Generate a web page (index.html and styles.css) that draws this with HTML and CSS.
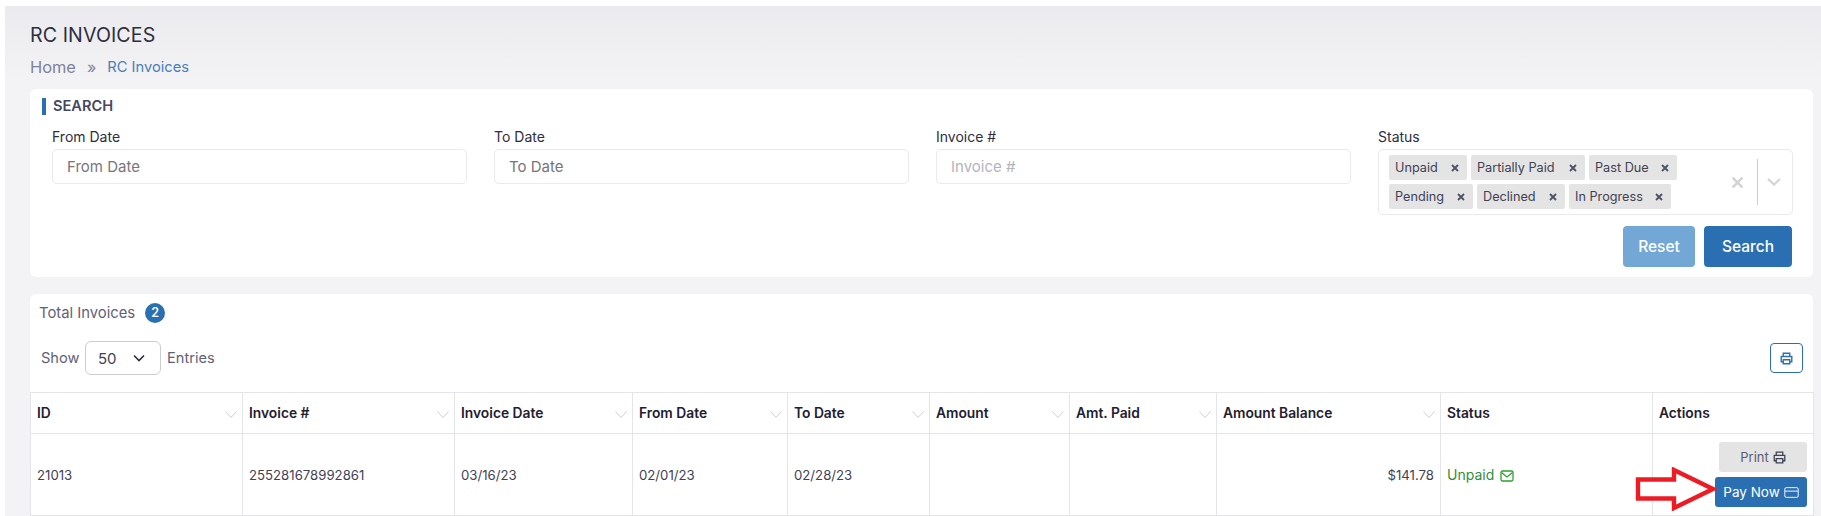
FILE: index.html
```html
<!DOCTYPE html>
<html lang="en">
<head>
<meta charset="utf-8">
<title>RC Invoices</title>
<link rel="stylesheet" href="styles.css">
</head>
<body>
<div class="page">
  <h1 class="title">RC INVOICES</h1>
  <nav class="crumbs"><span class="crumb-home">Home</span><span class="crumb-sep">»</span><span class="crumb-cur">RC Invoices</span></nav>

  <section class="card search-card">
    <h2 class="section-head">SEARCH</h2>
    <div class="fields">
      <div class="field"><label class="label">From Date</label><div class="input dark">From Date</div></div>
      <div class="field"><label class="label">To Date</label><div class="input dark">To Date</div></div>
      <div class="field"><label class="label">Invoice #</label><div class="input light">Invoice #</div></div>
      <div class="field"><label class="label">Status</label>
        <div class="multi">
          <div class="tags">
            <span class="tag t78">Unpaid<svg class="tag-x" viewBox="0 0 8 8"><path d="M1 1l6 6M7 1L1 7"/></svg></span>
            <span class="tag t114">Partially Paid<svg class="tag-x" viewBox="0 0 8 8"><path d="M1 1l6 6M7 1L1 7"/></svg></span>
            <span class="tag t88">Past Due<svg class="tag-x" viewBox="0 0 8 8"><path d="M1 1l6 6M7 1L1 7"/></svg></span>
            <span class="tag t84">Pending<svg class="tag-x" viewBox="0 0 8 8"><path d="M1 1l6 6M7 1L1 7"/></svg></span>
            <span class="tag t88">Declined<svg class="tag-x" viewBox="0 0 8 8"><path d="M1 1l6 6M7 1L1 7"/></svg></span>
            <span class="tag t102">In Progress<svg class="tag-x" viewBox="0 0 8 8"><path d="M1 1l6 6M7 1L1 7"/></svg></span>
          </div>
          <svg class="clear-x" viewBox="0 0 12 12"><path d="M1.5 1.5l9 9M10.5 1.5l-9 9"/></svg>
          <span class="divider"></span>
          <svg class="multi-chev" viewBox="0 0 14 8"><path d="M1 1l6 5.5L13 1"/></svg>
        </div>
      </div>
    </div>
    <div class="actions">
      <button class="btn reset">Reset</button>
      <button class="btn search">Search</button>
    </div>
  </section>

  <section class="card list-card">
    <div class="total"><span>Total Invoices</span><span class="badge">2</span></div>
    <div class="toolbar">
      <div class="show"><span class="show-word">Show</span>
        <div class="select"><span>50</span><svg class="select-chev" viewBox="0 0 12 8"><path d="M1 1.5l5 5 5-5"/></svg></div>
        <span>Entries</span></div>
      <button class="print-outline"><svg class="ico" viewBox="0 0 16 16"><path d="M4 5V1.5h8V5M4 12H1.5V5.5h13V12H12M4 9.5h8v5H4z"/></svg></button>
    </div>
    <table class="grid">
      <colgroup><col class="c1"><col class="c2"><col class="c3"><col class="c4"><col class="c5"><col class="c6"><col class="c7"><col class="c8"><col class="c9"><col class="c10"></colgroup>
      <thead><tr>
        <th>ID<svg class="sort" viewBox="0 0 12 7"><path d="M.5.5L6 6.5 11.5.5"/></svg></th>
        <th>Invoice #<svg class="sort" viewBox="0 0 12 7"><path d="M.5.5L6 6.5 11.5.5"/></svg></th>
        <th>Invoice Date<svg class="sort" viewBox="0 0 12 7"><path d="M.5.5L6 6.5 11.5.5"/></svg></th>
        <th>From Date<svg class="sort" viewBox="0 0 12 7"><path d="M.5.5L6 6.5 11.5.5"/></svg></th>
        <th>To Date<svg class="sort" viewBox="0 0 12 7"><path d="M.5.5L6 6.5 11.5.5"/></svg></th>
        <th>Amount<svg class="sort" viewBox="0 0 12 7"><path d="M.5.5L6 6.5 11.5.5"/></svg></th>
        <th>Amt. Paid<svg class="sort" viewBox="0 0 12 7"><path d="M.5.5L6 6.5 11.5.5"/></svg></th>
        <th>Amount Balance<svg class="sort" viewBox="0 0 12 7"><path d="M.5.5L6 6.5 11.5.5"/></svg></th>
        <th>Status</th>
        <th>Actions</th>
      </tr></thead>
      <tbody><tr>
        <td>21013</td>
        <td>255281678992861</td>
        <td>03/16/23</td>
        <td>02/01/23</td>
        <td>02/28/23</td>
        <td></td>
        <td></td>
        <td class="num">$141.78</td>
        <td class="status">Unpaid <svg class="mail" viewBox="0 0 14 12"><rect x="1" y="1" width="12" height="10" rx="1.5"/><path d="M1.5 2.5L7 7l5.5-4.5"/></svg></td>
        <td class="act-cell">
          <div class="row-actions">
            <button class="mini print">Print <svg class="ico-sm" viewBox="0 0 16 16"><path d="M4 5V1.5h8V5M4 12H1.5V5.5h13V12H12M4 9.5h8v5H4z"/></svg></button>
            <button class="mini pay">Pay Now <svg class="card-ico" viewBox="0 0 16 12"><rect x=".7" y=".7" width="14.6" height="10.6" rx="1.5"/><path d="M.7 4.5h14.6"/></svg></button>
          </div>
        </td>
      </tr></tbody>
    </table>
  </section>
</div>
<svg class="arrow" viewBox="0 0 82 44"><path d="M3 12.5H39V3L78 22 39 41V31.5H3z"/></svg>
</body>
</html>
```

FILE: styles.css
```css
* { box-sizing: border-box; }
html, body { margin: 0; height: 516px; overflow: hidden; background: #fff; }
body { font-family: Inter, "Noto Sans", sans-serif; color: #3f4254; position: relative; }
button { font-family: inherit; }

.page {
  margin: 6px 0 0 5px;
  height: 510px;
  padding: 17px 8px 0 25px;
  background: linear-gradient(#ebebef, #f3f3f5 75px);
}
.title { margin: 0; font-size: 19.6px; line-height: 24px; font-weight: 400; color: #2e2e40; letter-spacing: .1px; }
.crumbs { display: flex; align-items: center; margin: 8px 0 0; height: 23px; font-size: 16.4px; color: #7e8299; }
.crumb-sep { margin: 0 11px 0 11px; font-size: 16px; }
.crumb-cur { font-size: 14.7px; color: #4a7fb9; }

.card { background: #fff; border-radius: 6px; }
.search-card { height: 188px; margin-top: 11px; padding: 9px 21px 0 22px; }
.section-head {
  margin: 0 0 0 -10px; padding-left: 7px; border-left: 4px solid #2b6fb3;
  height: 17px; line-height: 17px; font-size: 14.6px; font-weight: 600; color: #454760;
}
.fields { display: grid; grid-template-columns: repeat(4, 415px); column-gap: 27px; margin-top: 13px; }
.label { display: block; height: 21px; line-height: 18px; font-size: 14px; color: #2e2e40; }
.input {
  height: 35px; line-height: 33px; padding-left: 14px; font-size: 15px;
  border: 1px solid #e9e9f2; border-radius: 5px; background: #fff;
}
.dark { color: #77757a; }
.light { color: #b3b3bd; }
.multi {
  position: relative; height: 66px; display: flex; align-items: center;
  border: 1px solid #e9e9f2; border-radius: 5px; padding: 5px 0 5px 10px;
}
.tags { display: flex; flex-wrap: wrap; gap: 4px; width: 300px; }
.tag {
  display: flex; align-items: center; justify-content: space-between;
  height: 25px; padding: 0 8px 0 6px; font-size: 12.7px; color: #3f4254;
  background: #e4e4e4; border-radius: 2px;
}
.t78 { width: 78px; } .t114 { width: 114px; } .t88 { width: 88px; } .t84 { width: 84px; } .t102 { width: 102px; }
.tag-x { width: 8px; height: 8px; flex: none; fill: none; stroke: #4d5168; stroke-width: 1.8; }
.clear-x { width: 13px; height: 13px; margin-left: 42px; fill: none; stroke: #d4d4d4; stroke-width: 2.4; }
.divider { width: 1px; height: 46px; margin-left: 13px; background: #ccc; }
.multi-chev { width: 14px; height: 8px; margin-left: 9px; fill: none; stroke: #d4d4d4; stroke-width: 2.2; }
.actions { display: flex; justify-content: flex-end; gap: 9px; margin-top: 11px; }
.btn { height: 41px; border: 0; border-radius: 4px; color: #fff; font-size: 15.5px; font-weight: 500; }
.reset { width: 72px; background: #73a7d6; }
.search { width: 88px; background: #2b6fb3; }

.list-card { height: 240px; margin-top: 17px; padding-top: 9px; }
.total { display: flex; align-items: center; gap: 10px; height: 20px; margin: 0 0 0 9px; font-size: 14.8px; color: #5e6278; }
.badge { width: 20px; height: 20px; line-height: 20px; border-radius: 50%; background: #2b6fb3; color: #fff; text-align: center; font-size: 12.5px; font-weight: 600; }
.toolbar { display: flex; align-items: center; justify-content: space-between; height: 34px; margin-top: 18px; padding: 0 10px 0 11px; }
.show { display: flex; align-items: center; gap: 6px; font-size: 14.6px; color: #5e6278; }
.show-word { width: 38px; }
.select {
  display: flex; align-items: center; justify-content: space-between; width: 76px; height: 34px;
  padding: 0 15px 0 12px; border: 1px solid #ccccd6; border-radius: 6px; color: #3f4254; font-size: 15px;
}
.select-chev { width: 12px; height: 8px; fill: none; stroke: #2e2e40; stroke-width: 1.6; }
.print-outline {
  display: flex; align-items: center; justify-content: center; width: 33px; height: 30px; padding: 0;
  background: #fff; border: 1px solid #2b6fb3; border-radius: 4px;
}
.ico { width: 13px; height: 13px; fill: none; stroke: #2b6fb3; stroke-width: 1.7; }

.grid { width: 1783px; margin: 17px 0 0; border-collapse: collapse; table-layout: fixed; font-size: 13.2px; }
.c1, .c2, .c9 { width: 212px; } .c3 { width: 178px; } .c4 { width: 155px; } .c5 { width: 142px; }
.c6 { width: 140px; } .c7 { width: 147px; } .c8 { width: 224px; } .c10 { width: 161px; }
th, td { border: 1px solid #e4e4ec; padding: 0 6px 0 6px; }
th { position: relative; height: 41px; text-align: left; font-size: 13.8px; font-weight: 600; color: #1f2030; }
td { height: 82px; color: #3f4254; }
.sort { position: absolute; right: 5px; top: 18px; width: 12px; height: 7px; fill: none; stroke: #c8c8d0; stroke-width: .9; }
.num { text-align: right; }
.status { color: #2f8f3a; font-size: 14px; }
.mail { width: 14px; height: 12px; margin: 0 0 -2px 2px; fill: none; stroke: #2ea02e; stroke-width: 1.3; }
.act-cell { padding: 0 6px 0 0; }
.row-actions { display: flex; flex-direction: column; align-items: flex-end; gap: 5px; }
.mini { display: flex; align-items: center; justify-content: center; gap: 4px; height: 30px; border: 0; border-radius: 3px; font-size: 13px; padding: 0; }
.print { width: 88px; background: #e4e4e4; color: #5a5c70; }
.pay { width: 92px; background: #2b6fb3; color: #fff; font-size: 13.5px; font-weight: 400; }
.ico-sm { width: 13px; height: 13px; fill: none; stroke: #3f4254; stroke-width: 1.6; }
.card-ico { width: 15px; height: 11px; fill: none; stroke: #fff; stroke-width: 1; }

.arrow { position: absolute; left: 1635px; top: 467px; width: 82px; height: 44px; fill: #fff; stroke: #ed1c24; stroke-width: 4.4; stroke-linejoin: miter; }
```
